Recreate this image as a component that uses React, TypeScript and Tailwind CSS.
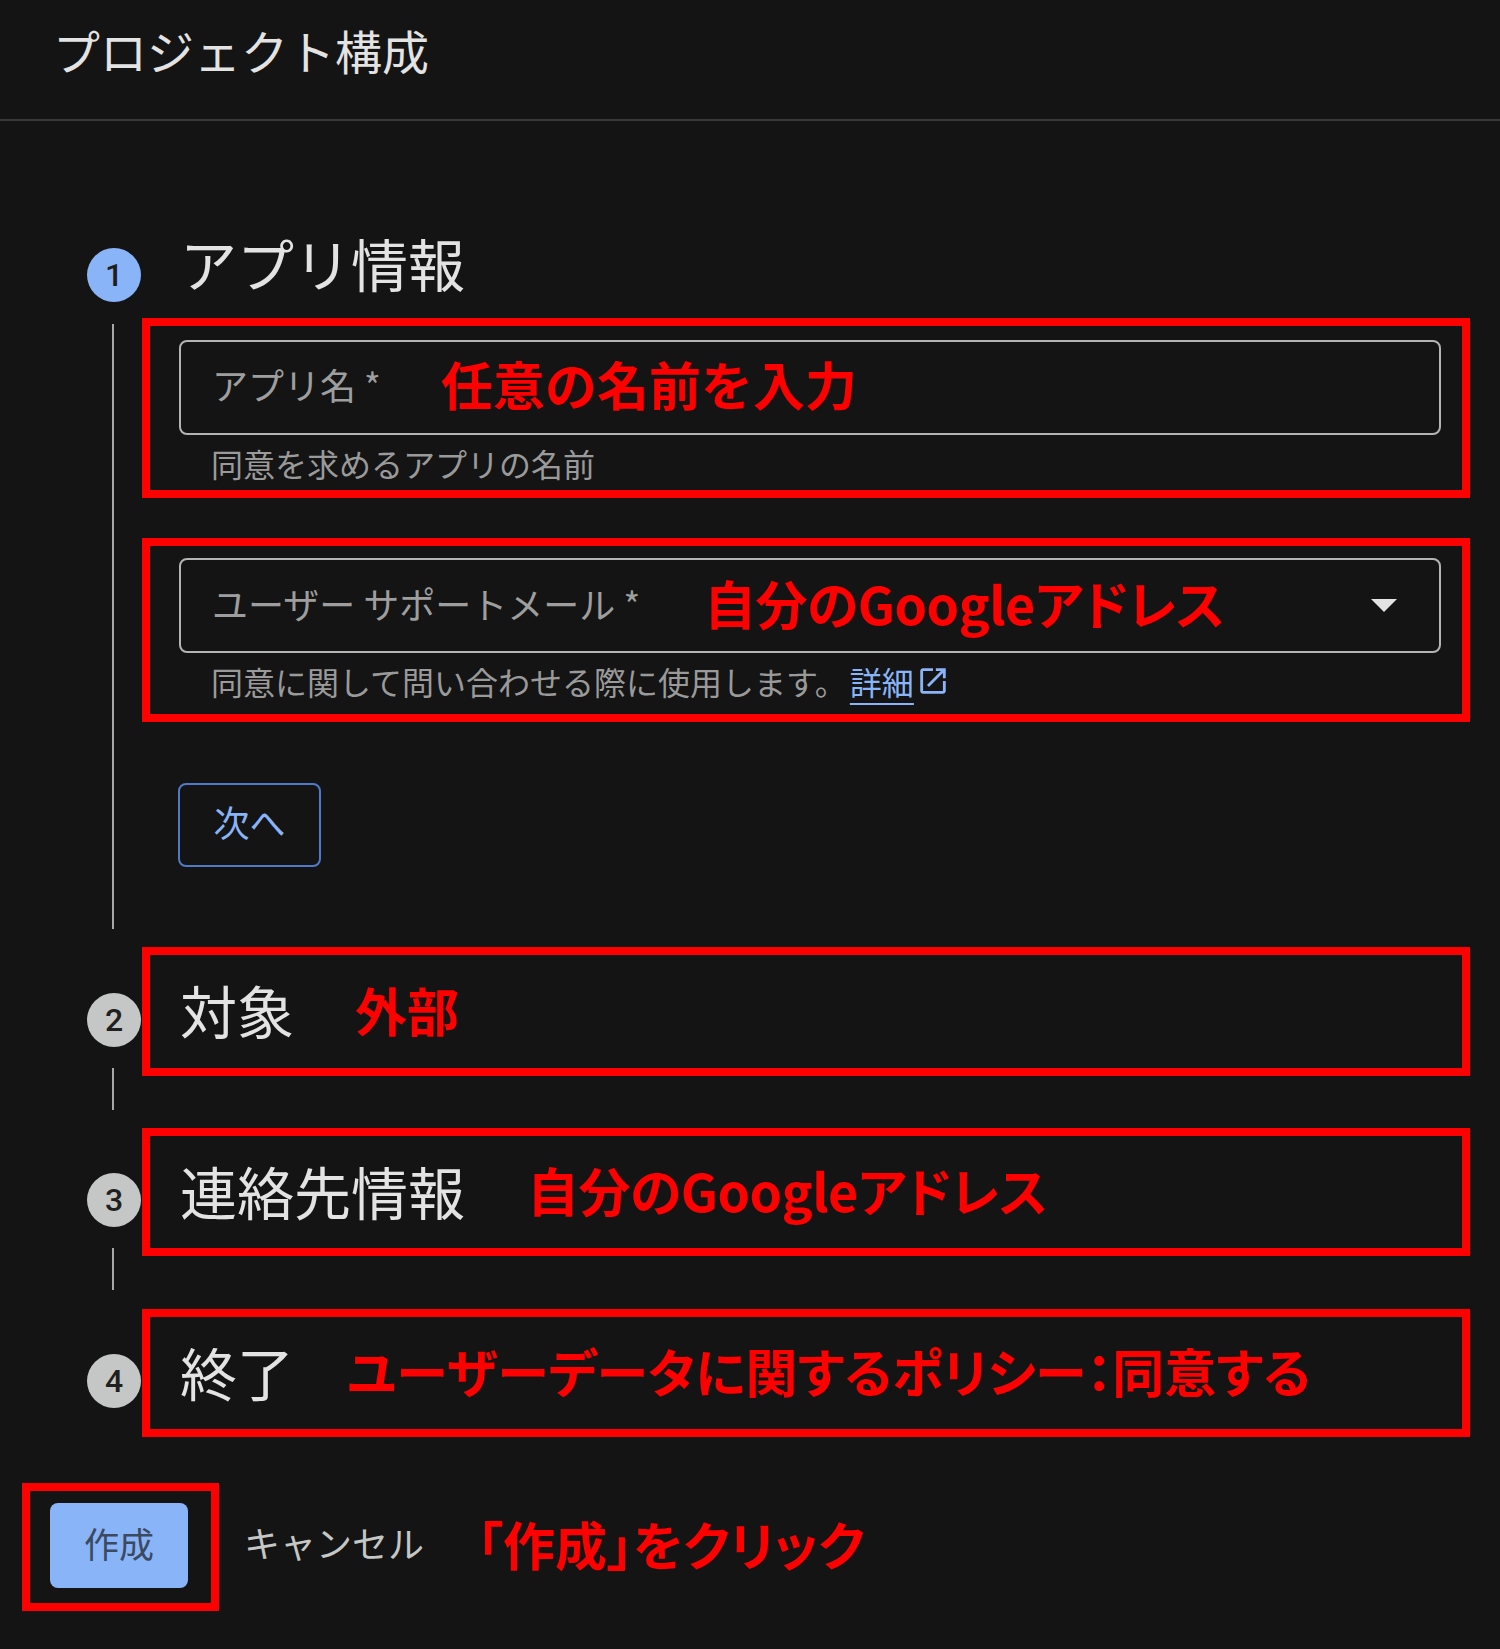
import React from "react";

const note = "text-[52px] leading-[52px] font-bold text-[#ff0000] whitespace-nowrap";

const StepCircle = ({ n, active }: { n: number; active?: boolean }) => (
  <div
    className={
      "w-[54px] h-[54px] rounded-full flex items-center justify-center font-['Roboto',sans-serif] text-[32px] font-medium text-[#1f1f1f] " +
      (active ? "bg-[#8ab4f8]" : "bg-[#c4c7c5]")
    }
  >
    {n}
  </div>
);

const CollapsedStep = ({
  n,
  title,
  titleW,
  children,
  circleMt,
  boxH,
  last,
}: {
  n: number;
  title: string;
  titleW: string;
  children: React.ReactNode;
  circleMt: string;
  boxH: string;
  last?: boolean;
}) => (
  <div className="flex">
    <div className="w-[142px] shrink-0">
      <div className={"ml-[87px] " + circleMt}>
        <StepCircle n={n} />
      </div>
      {!last && <div className="ml-[112px] mt-[21px] h-[42px] w-[2px] bg-[#a8a8a8]" />}
    </div>
    <div className={"w-[1328px] border-8 border-[#ff0000] flex items-center pl-[30px] pb-[4px] " + boxH}>
      <div className={"text-[57px] leading-[57px] text-[#e3e3e3] shrink-0 " + titleW}>{title}</div>
      {children}
    </div>
  </div>
);

export default function App() {
  return (
    <div className="w-[1500px] h-[1649px] bg-[#141414] font-['Noto_Sans_CJK_JP',sans-serif] overflow-hidden">
      <div className="h-[121px] border-b-2 border-[#3a3a3a] pl-[53px] pt-[26px]">
        <h1 className="text-[47px] leading-[47px] text-[#e3e3e3]">プロジェクト構成</h1>
      </div>

      <div className="pt-[107px]">
        {/* step 1 */}
        <div className="flex">
          <div className="w-[142px] shrink-0">
            <div className="ml-[87px] mt-[20px]">
              <StepCircle n={1} active />
            </div>
            <div className="ml-[112px] mt-[22px] h-[605px] w-[2px] bg-[#a8a8a8]" />
          </div>
          <div className="w-[1328px]">
            <div className="mt-[6px] pl-[38px] text-[57px] leading-[57px] text-[#e3e3e3]">アプリ情報</div>

            <div className="mt-[27px] border-8 border-[#ff0000] pt-[14px] pl-[29px] pr-[21px] pb-[11px]">
              <div className="h-[95px] border-2 border-[#b4b4b4] rounded-[8px] flex items-center pl-[31px] pb-[7px]">
                <span className="w-[229px] shrink-0 text-[36px] leading-[36px] text-[#9e9e9e]">アプリ名 *</span>
                <span className={note}>任意の名前を入力</span>
              </div>
              <div className="mt-[12px] pl-[32px] text-[32px] leading-[32px] text-[#9a9a9a]">同意を求めるアプリの名前</div>
            </div>

            <div className="mt-[40px] border-8 border-[#ff0000] pt-[12px] pl-[29px] pr-[21px] pb-[16px]">
              <div className="h-[95px] border-2 border-[#b4b4b4] rounded-[8px] flex items-center pl-[31px] pr-[42px]">
                <span className="w-[492px] shrink-0 mb-[6px] text-[36px] leading-[36px] text-[#9e9e9e]">ユーザー サポートメール *</span>
                <span className={note + " mb-[6px] tracking-[-0.5px] [font-feature-settings:'palt']"}>自分のGoogleアドレス</span>
                <svg className="ml-auto" width="26" height="13" viewBox="0 0 26 13">
                  <polygon points="0,0 26,0 13,13" fill="#e3e3e3" />
                </svg>
              </div>
              <div className="mt-[11px] pl-[32px] flex items-center text-[32px] leading-[32px] text-[#9a9a9a]">
                <span>同意に関して問い合わせる際に使用します。</span>
                <span className="ml-[3px] text-[#8ab4f8] underline decoration-2 underline-offset-[8px]">詳細</span>
                <svg className="ml-[2px]" width="34" height="34" viewBox="0 0 24 24" fill="#8ab4f8">
                  <path d="M19 19H5V5h7V3H5c-1.11 0-2 .9-2 2v14c0 1.1.89 2 2 2h14c1.1 0 2-.9 2-2v-7h-2v7zM14 3v2h3.59l-9.83 9.83 1.41 1.41L19 6.41V10h2V3h-7z" />
                </svg>
              </div>
            </div>

            <button className="mt-[61px] ml-[36px] w-[143px] h-[84px] border-2 border-[#4f7ac7] rounded-[8px] pb-[8px] text-[36px] leading-[36px] text-[#8ab4f8] flex items-center justify-center">
              次へ
            </button>
          </div>
        </div>

        {/* step 2 */}
        <div className="mt-[18px]">
          <CollapsedStep n={2} title="対象" titleW="w-[175px]" circleMt="mt-[46px]" boxH="h-[129px]">
            <span className={note}>外部</span>
          </CollapsedStep>
        </div>

        {/* step 3 */}
        <div className="mt-[18px]">
          <CollapsedStep n={3} title="連絡先情報" titleW="w-[347px]" circleMt="mt-[45px]" boxH="h-[128px]">
            <span className={note + " tracking-[-0.5px] [font-feature-settings:'palt']"}>自分のGoogleアドレス</span>
          </CollapsedStep>
        </div>

        {/* step 4 */}
        <div className="mt-[19px]">
          <CollapsedStep n={4} title="終了" titleW="w-[167px]" circleMt="mt-[45px]" boxH="h-[128px]" last>
            <span className={note + " [font-feature-settings:'palt']"}>ユーザーデータに関するポリシー：同意する</span>
          </CollapsedStep>
        </div>

        {/* actions */}
        <div className="mt-[46px] flex items-center">
          <div className="ml-[22px] w-[197px] h-[128px] border-8 border-[#ff0000] pl-[20px] pt-[12px]">
            <button className="w-[138px] h-[85px] rounded-[8px] bg-[#8ab4f8] pb-[6px] text-[35px] leading-[35px] text-[#3b4a60] flex items-center justify-center">
              作成
            </button>
          </div>
          <span className="ml-[25px] mb-[10px] text-[36px] leading-[36px] text-[#c4c7c5]">キャンセル</span>
          <span className={note + " ml-[53px] mb-[6px] [font-feature-settings:'palt']"}>「作成」をクリック</span>
        </div>
      </div>
    </div>
  );
}
